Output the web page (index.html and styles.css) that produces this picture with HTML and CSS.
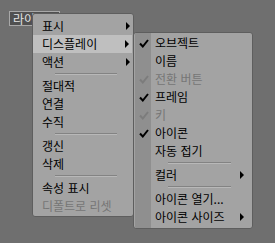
FILE: index.html
```html
<!DOCTYPE html>
<html lang="ko">
<head>
<meta charset="utf-8">
<link rel="stylesheet" href="styles.css">
</head>
<body>
<div class="stage">
  <div class="label"><span>라이트</span></div>

  <div class="menu menu-main">
    <div class="row sub"><span>표시</span><i class="arrow"></i></div>
    <div class="row sub active"><span>디스플레이</span><i class="arrow"></i></div>
    <div class="row sub"><span>액션</span><i class="arrow"></i></div>
    <div class="sep"></div>
    <div class="row"><span>절대적</span></div>
    <div class="row"><span>연결</span></div>
    <div class="row"><span>수직</span></div>
    <div class="sep"></div>
    <div class="row"><span>갱신</span></div>
    <div class="row"><span>삭제</span></div>
    <div class="sep"></div>
    <div class="row"><span>속성 표시</span></div>
    <div class="row disabled"><span>디폴트로 리셋</span></div>
  </div>

  <div class="menu menu-sub">
    <div class="gutter"></div>
    <div class="row"><svg class="check" viewBox="0 0 10 9"><path d="M1 4.5 L3.8 7.5 L9 1"/></svg><span>오브젝트</span></div>
    <div class="row"><span>이름</span></div>
    <div class="row disabled"><svg class="check" viewBox="0 0 10 9"><path d="M1 4.5 L3.8 7.5 L9 1"/></svg><span>전환 버튼</span></div>
    <div class="row"><svg class="check" viewBox="0 0 10 9"><path d="M1 4.5 L3.8 7.5 L9 1"/></svg><span>프레임</span></div>
    <div class="row disabled"><svg class="check" viewBox="0 0 10 9"><path d="M1 4.5 L3.8 7.5 L9 1"/></svg><span>키</span></div>
    <div class="row"><svg class="check" viewBox="0 0 10 9"><path d="M1 4.5 L3.8 7.5 L9 1"/></svg><span>아이콘</span></div>
    <div class="row"><span>자동 접기</span></div>
    <div class="sep"></div>
    <div class="row sub"><span>컬러</span><i class="arrow"></i></div>
    <div class="sep"></div>
    <div class="row"><span>아이콘 열기...</span></div>
    <div class="row sub"><span>아이콘 사이즈</span><i class="arrow"></i></div>
  </div>
</div>
</body>
</html>
```
FILE: styles.css
```css
html, body {
  margin: 0;
  padding: 0;
  background: #6f6f6f;
}
.stage {
  position: relative;
  width: 275px;
  height: 243px;
  overflow: hidden;
  font-family: "Noto Sans CJK KR", "Noto Sans", sans-serif;
  font-size: 12px;
}
.label {
  position: absolute;
  left: 9px;
  top: 11px;
  width: 46px;
  height: 13px;
  line-height: 13px;
  padding: 0 0 0 3px;
  background: #505050;
  border: 1px solid #a8a8a8;
  color: #e4e4e4;
  white-space: nowrap;
  overflow: hidden;
}
.menu {
  position: absolute;
  background: #a3a3a3;
  border: 1px solid #5e5e5e;
  border-radius: 3px;
  box-sizing: border-box;
  padding: 2px 0;
  color: #000;
}
.menu-main {
  left: 32px;
  top: 13px;
  width: 102px;
  height: 204px;
  padding-top: 3px;
}
.menu-sub {
  left: 133px;
  top: 32px;
  width: 120px;
  height: 197px;
  padding: 1px 0;
  overflow: hidden;
}
.gutter {
  position: absolute;
  left: 1px;
  top: 0;
  bottom: 0;
  width: 16px;
  background: #8f8f8f;
}
.row {
  position: relative;
  display: flex;
  align-items: center;
  height: 18px;
  line-height: 18px;
  white-space: nowrap;
}
.menu-main .row {
  padding-left: 9px;
}
.menu-sub .row {
  padding-left: 21px;
}
.row.active {
  background: #bfbfbf;
  margin-right: 1px;
}
.row.disabled {
  color: #767676;
}
.arrow {
  position: absolute;
  top: 5px;
  width: 0;
  height: 0;
  border-top: 4px solid transparent;
  border-bottom: 4px solid transparent;
  border-left: 4px solid #000;
}
.menu-main .arrow {
  right: 3px;
}
.menu-sub .arrow {
  right: 8px;
}
.check {
  position: absolute;
  left: 5px;
  top: 5px;
  width: 10px;
  height: 9px;
  fill: none;
  stroke: #000;
  stroke-width: 2;
}
.disabled .check {
  stroke: #7c7c7c;
}
.sep {
  height: 6px;
  position: relative;
}
.sep::before {
  content: "";
  position: absolute;
  top: 2px;
  height: 1px;
  background: #838383;
  border-bottom: 1px solid #b8b8b8;
}
.menu-main .sep::before {
  left: 22px;
  right: 16px;
}
.menu-sub .sep::before {
  left: 34px;
  right: 21px;
}
```
